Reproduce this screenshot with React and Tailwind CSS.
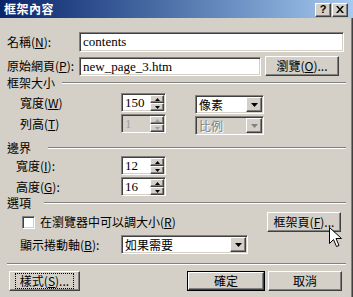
import React from "react";

const sunken =
  "border border-t-[#808080] border-l-[#808080] border-r-white border-b-white shadow-[inset_1px_1px_0_#404040,inset_-1px_-1px_0_#d4d0c8]";
const raised =
  "border border-t-white border-l-white border-r-[#404040] border-b-[#404040] shadow-[inset_-1px_-1px_0_#808080,inset_1px_1px_0_#d4d0c8] bg-[#d4d0c8]";

function Tri({ dir = "down", disabled }) {
  const fill = disabled ? "#808080" : "#000";
  return (
    <svg width="7" height="4" viewBox="0 0 7 4" className="block">
      {dir === "down" ? (
        <polygon points="0,0 7,0 3.5,4" fill={fill} />
      ) : (
        <polygon points="0,4 7,4 3.5,0" fill={fill} />
      )}
    </svg>
  );
}

function SmallTri({ dir, disabled }) {
  const fill = disabled ? "#a0a0a0" : "#000";
  return (
    <svg width="5" height="3" viewBox="0 0 5 3" className="block">
      {dir === "down" ? (
        <polygon points="0,0 5,0 2.5,3" fill={fill} />
      ) : (
        <polygon points="0,3 5,3 2.5,0" fill={fill} />
      )}
    </svg>
  );
}

function Spinner({ value, disabled }) {
  return (
    <div
      className={`flex w-[45px] h-[19px] ${sunken} ${
        disabled ? "bg-[#d4d0c8]" : "bg-white"
      }`}
    >
      <div
        className={`flex-1 pl-[3px] text-[13px] leading-[17px] font-['Liberation_Serif',serif] ${
          disabled ? "text-[#a0a0a0]" : "text-black"
        }`}
      >
        {value}
      </div>
      <div className="flex flex-col w-[14px] mt-[1px] mr-[1px]">
        <div className={`h-[8px] flex items-center justify-center ${raised}`}>
          <SmallTri dir="up" disabled={disabled} />
        </div>
        <div className={`h-[8px] flex items-center justify-center ${raised}`}>
          <SmallTri dir="down" disabled={disabled} />
        </div>
      </div>
    </div>
  );
}

function Select({ value, width, disabled }) {
  return (
    <div
      className={`flex h-[19px] ${sunken} ${
        disabled ? "bg-[#d4d0c8]" : "bg-white"
      }`}
      style={{ width }}
    >
      <div
        className={`flex-1 pl-[3px] text-[12px] leading-[17px] ${
          disabled
            ? "text-[#808080] [text-shadow:1px_1px_0_#ffffff]"
            : "text-black"
        }`}
      >
        {value}
      </div>
      <div
        className={`w-[16px] h-[15px] mt-[1px] mr-[1px] flex items-center justify-center ${raised}`}
      >
        <Tri disabled={disabled} />
      </div>
    </div>
  );
}

function Button({ children, className = "", focus, def }) {
  return (
    <div
      className={`${
        def ? "border border-black" : ""
      } h-[20px] ${className} flex`}
    >
      <div className={`flex-1 flex items-center justify-center ${raised}`}>
        <div
          className={`px-[3px] leading-[12px] ${
            focus ? "outline outline-1 outline-dotted outline-black outline-offset-[1px]" : ""
          }`}
        >
          {children}
        </div>
      </div>
    </div>
  );
}

function Header({ text, lineStart }) {
  return (
    <div className="flex items-center h-[14px]">
      <div className="leading-none whitespace-nowrap" style={{ width: lineStart }}>
        {text}
      </div>
      <div className="flex-1 border-t border-t-[#808080] border-b border-b-white" />
    </div>
  );
}

export default function App() {
  return (
    <div className="relative w-[353px] h-[297px] overflow-hidden bg-[#d4d0c8] text-[12px] text-black font-['Noto_Sans_CJK_TC','Noto_Sans_CJK_SC',sans-serif] shadow-[inset_-1px_0_0_#404040,inset_-2px_0_0_#808080]">
      {/* Title bar */}
      <div className="h-[18px] flex items-center justify-between bg-linear-to-r from-[#0a246a] to-[#a6caf0]">
        <div className="pl-[4px] text-white font-bold text-[12px] leading-none tracking-[0.5px]">
          框架內容
        </div>
        <div className="flex gap-[1px] mr-[5px] mt-[1px]">
          <div className={`w-[16px] h-[14px] flex items-center justify-center text-[11px] font-bold leading-none font-['Liberation_Sans',sans-serif] ${raised}`}>
            ?
          </div>
          <div className={`w-[16px] h-[14px] flex items-center justify-center ${raised}`}>
            <svg width="8" height="7" viewBox="0 0 8 7">
              <path d="M0,0 L2,0 L4,2.5 L6,0 L8,0 L5,3.5 L8,7 L6,7 L4,4.5 L2,7 L0,7 L3,3.5 Z" fill="#000" />
            </svg>
          </div>
        </div>
      </div>

      <div className="flex flex-col px-[7px]">
        {/* 名稱 */}
        <div className="mt-[14px] h-[20px] flex items-center">
          <div className="w-[72px] leading-none">
            名稱(<u>N</u>):
          </div>
          <div className={`w-[265px] h-[20px] bg-white ${sunken} pl-[3px] text-[13px] leading-[18px] font-['Liberation_Serif',serif]`}>
            contents
          </div>
        </div>
        {/* 原始網頁 */}
        <div className="mt-[4px] h-[20px] flex items-center">
          <div className="w-[72px] leading-none whitespace-nowrap">
            原始網頁(<u>P</u>):
          </div>
          <div className={`w-[182px] h-[19px] bg-white ${sunken} pl-[3px] text-[13px] leading-[17px] font-['Liberation_Serif',serif]`}>
            new_page_3.htm
          </div>
          <Button className="w-[74px] ml-[4px]">
            瀏覽(<u>O</u>)...
          </Button>
        </div>

        <Header text="框架大小" lineStart={55} />

        {/* 寬度 W */}
        <div className="mt-[3px] h-[20px] flex items-start pl-[13px]">
          <div className="w-[101px] leading-none mt-[4px]">
            寬度(<u>W</u>)
          </div>
          <Spinner value="150" />
          <div className="ml-[29px] mt-[2px]">
            <Select value="像素" width={69} />
          </div>
        </div>
        {/* 列高 */}
        <div className="mt-[1px] h-[20px] flex items-start pl-[13px]">
          <div className="w-[101px] leading-none mt-[4px]">
            列高(<u>T</u>)
          </div>
          <Spinner value="1" disabled />
          <div className="ml-[29px] mt-[2px]">
            <Select value="比例" width={69} disabled />
          </div>
        </div>

        <div className="mt-[7px]">
          <Header text="邊界" lineStart={41} />
        </div>

        {/* 寬度 I */}
        <div className="mt-[1px] h-[19px] flex items-center pl-[9px]">
          <div className="w-[105px] leading-none">
            寬度(<u>I</u>):
          </div>
          <Spinner value="12" />
        </div>
        {/* 高度 G */}
        <div className="mt-[2px] h-[19px] flex items-center pl-[9px]">
          <div className="w-[105px] leading-none">
            高度(<u>G</u>):
          </div>
          <Spinner value="16" />
        </div>

        <Header text="選項" lineStart={37} />

        {/* checkbox row */}
        <div className="mt-[2px] h-[20px] flex items-center pl-[15px]">
          <div className={`w-[13px] h-[13px] bg-white ${sunken}`} />
          <div className="ml-[5px] leading-none">
            在瀏覽器中可以調大小(<u>R</u>)
          </div>
          <Button className="w-[74px] ml-auto mr-[5px]">
            框架頁(<u>F</u>)...
          </Button>
        </div>

        {/* scroll row */}
        <div className="mt-[3px] h-[20px] flex items-center pl-[13px]">
          <div className="w-[101px] leading-none">
            顯示捲動軸(<u>B</u>):
          </div>
          <div className="h-[20px] flex">
            <Select value="如果需要" width={127} />
          </div>
        </div>

        {/* separator */}
        <div className="mt-[8px] border-t border-t-[#808080] border-b border-b-white" />

        {/* bottom buttons */}
        <div className="mt-[6px] h-[20px] flex items-center">
          <Button className="w-[71px] ml-[2px]" focus>
            樣式(<u>S</u>)...
          </Button>
          <Button className="w-[78px] ml-auto" def>
            確定
          </Button>
          <Button className="w-[74px] ml-[3px] mr-[4px]">取消</Button>
        </div>
      </div>

      {/* mouse cursor */}
      <svg
        className="absolute left-[329px] top-[227px]"
        width="13"
        height="21"
        viewBox="0 0 13 21"
      >
        <path
          d="M0.5,0.5 L0.5,16.5 L4.5,12.5 L7.5,19.5 L10,18.5 L7,11.5 L12.5,11.5 Z"
          fill="#fff"
          stroke="#000"
          strokeWidth="1"
          strokeLinejoin="miter"
        />
      </svg>
    </div>
  );
}
